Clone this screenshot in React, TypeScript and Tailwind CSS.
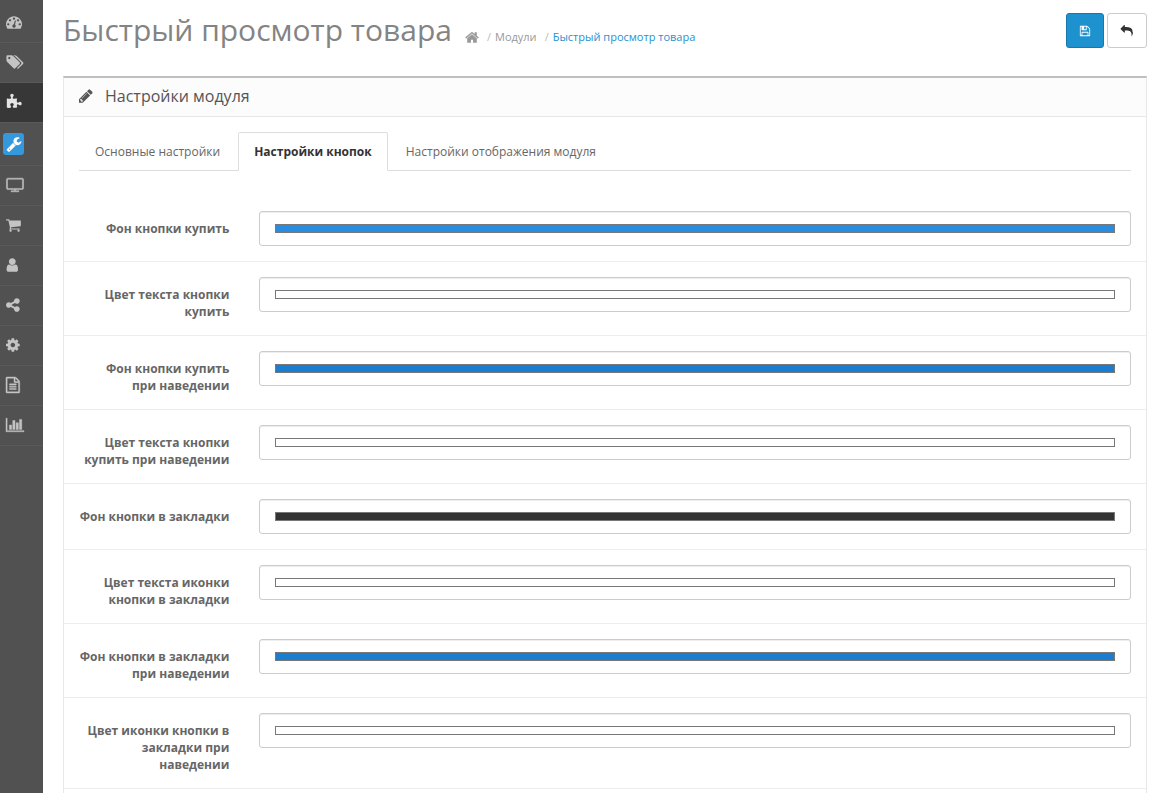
import { useState } from "react";

const icons = {
  dashboard: { w: 1792, d: "M384 1152q0-53-37.5-90.5t-90.5-37.5-90.5 37.5-37.5 90.5 37.5 90.5 90.5 37.5 90.5-37.5 37.5-90.5zm192-448q0-53-37.5-90.5t-90.5-37.5-90.5 37.5-37.5 90.5 37.5 90.5 90.5 37.5 90.5-37.5 37.5-90.5zm428 481l101-382q6-26-7.5-48.5t-38.5-29.5-48 6.5-30 39.5l-101 382q-60 5-107 43.5t-63 98.5q-20 77 20 146t117 89 146-20 89-117q16-60-6-117t-72-91zm660-33q0-53-37.5-90.5t-90.5-37.5-90.5 37.5-37.5 90.5 37.5 90.5 90.5 37.5 90.5-37.5 37.5-90.5zm-640-640q0-53-37.5-90.5t-90.5-37.5-90.5 37.5-37.5 90.5 37.5 90.5 90.5 37.5 90.5-37.5 37.5-90.5zm448 192q0-53-37.5-90.5t-90.5-37.5-90.5 37.5-37.5 90.5 37.5 90.5 90.5 37.5 90.5-37.5 37.5-90.5zm320 448q0 261-141 483-19 29-54 29h-1402q-35 0-54-29-141-221-141-483 0-182 71-348t191-286 286-191 348-71 348 71 286 191 191 286 71 348z" },
  tags: { w: 1920, d: "M448 448q0-53-37.5-90.5t-90.5-37.5-90.5 37.5-37.5 90.5 37.5 90.5 90.5 37.5 90.5-37.5 37.5-90.5zm1067 576q0 53-37 90l-491 492q-39 37-91 37-53 0-90-37l-715-716q-38-37-64.5-101t-26.5-117v-416q0-52 38-90t90-38h416q53 0 117 26.5t102 64.5l715 714q37 39 37 91zm384 0q0 53-37 90l-491 492q-39 37-91 37-36 0-59-14t-53-45l470-470q37-37 37-90 0-52-37-91l-715-714q-38-38-102-64.5t-117-26.5h224q53 0 117 26.5t102 64.5l715 714q37 39 37 91z" },
  puzzle: { w: 1792, d: "M1755 1083q0 81-44.5 135t-123.5 54q-41 0-77.5-17.5t-59-38-56.5-38-71-17.5q-110 0-110 124 0 39 16 115t15 115v5q-22 0-33 1-34 3-97.5 11.5t-115.5 13.5-98 5q-61 0-103-26.5t-42-83.5q0-37 17.5-71t38-56.5 38-59 17.5-77.5q0-79-54-123.5t-135-44.5q-84 0-143 45.5t-59 127.5q0 43 15 83t33.5 64.5 33.5 53 15 50.5q0 45-46 89-37 35-117 35-95 0-245-24-9-2-27.5-4t-27.5-4l-13-2q-1 0-3-1-2 0-2-1v-1024q2 1 17.5 3.5t34 5 21.5 3.5q150 24 245 24 80 0 117-35 46-44 46-89 0-22-15-50.5t-33.5-53-33.5-64.5-15-83q0-82 59-127.5t144-45.5q80 0 134 44.5t54 123.5q0 41-17.5 77.5t-38 59-38 56.5-17.5 71q0 57 42 83.5t103 26.5q64 0 180-15t163-17v2q-1 2-3.5 17.5t-5 34-3.5 21.5q-24 150-24 245 0 80 35 117 44 46 89 46 22 0 50.5-15t53-33.5 64.5-33.5 83-15q82 0 127.5 59t45.5 143z" },
  wrench: { w: 1792, d: "M448 1472q0-26-19-45t-45-19-45 19-19 45 19 45 45 19 45-19 19-45zm644-420l-682 682q-37 37-90 37-52 0-91-37l-106-108q-38-36-38-90 0-53 38-91l681-681q39 98 114.5 173.5t173.5 114.5zm634-435q0 39-23 106-47 134-164.5 217.5t-258.5 83.5q-185 0-316.5-131.5t-131.5-316.5 131.5-316.5 316.5-131.5q58 0 121.5 16.5t107.5 46.5q16 11 16 28t-16 28l-293 169v224l193 107q5-3 79-48.5t135.5-81 70.5-35.5q15 0 23.5 10t8.5 25z" },
  tv: { w: 1920, bold: true, d: "M1792 1248v-960q0-13-9.5-22.5t-22.5-9.5h-1600q-13 0-22.5 9.5t-9.5 22.5v960q0 13 9.5 22.5t22.5 9.5h1600q13 0 22.5-9.5t9.5-22.5zm128-960v960q0 66-47 113t-113 47h-736v128h352q14 0 23 9t9 23v64q0 14-9 23t-23 9h-832q-14 0-23-9t-9-23v-64q0-14 9-23t23-9h352v-128h-736q-66 0-113-47t-47-113v-960q0-66 47-113t113-47h1600q66 0 113 47t47 113z" },
  cart: { w: 1792, x: 64, d: "M704 1536q0 52-38 90t-90 38-90-38-38-90 38-90 90-38 90 38 38 90zm896 0q0 52-38 90t-90 38-90-38-38-90 38-90 90-38 90 38 38 90zm128-1088v512q0 24-16.5 42.5t-40.5 21.5l-1044 122q13 60 13 70 0 16-24 64h920q26 0 45 19t19 45-19 45-45 19h-1024q-26 0-45-19t-19-45q0-11 8-31.5t16-36 21.5-40 15.5-29.5l-177-823h-204q-26 0-45-19t-19-45 19-45 45-19h256q16 0 28.5 6.5t19.5 15.5 13 24.5 8 26 5.5 29.5 4.5 26h1201q26 0 45 19t19 45z" },
  user: { w: 1792, x: 192, d: "M1536 1399q0 109-62.5 187t-150.5 78h-854q-88 0-150.5-78t-62.5-187q0-85 8.5-160.5t31.5-152 58.5-131 94-89 134.5-34.5q131 128 313 128t313-128q76 0 134.5 34.5t94 89 58.5 131 31.5 152 8.5 160.5zm-256-887q0 159-112.5 271.5t-271.5 112.5-271.5-112.5-112.5-271.5 112.5-271.5 271.5-112.5 271.5 112.5 112.5 271.5z" },
  share: { w: 1792, x: 128, d: "M1344 1024q133 0 226.5 93.5t93.5 226.5-93.5 226.5-226.5 93.5-226.5-93.5-93.5-226.5q0-12 2-34l-360-180q-92 86-218 86-133 0-226.5-93.5t-93.5-226.5 93.5-226.5 226.5-93.5q126 0 218 86l360-180q-2-22-2-34 0-133 93.5-226.5t226.5-93.5 226.5 93.5 93.5 226.5-93.5 226.5-226.5 93.5q-126 0-218-86l-360 180q2 22 2 34t-2 34l360 180q92-86 218-86z" },
  cog: { w: 1792, x: 128, d: "M1152 896q0-106-75-181t-181-75-181 75-75 181 75 181 181 75 181-75 75-181zm512-109v222q0 12-8 23t-20 13l-185 28q-19 54-39 91 35 50 107 138 10 12 10 25t-9 23q-27 37-99 108t-94 71q-12 0-26-9l-138-108q-44 23-91 38-16 136-29 186-7 28-36 28h-222q-14 0-24.5-8.5t-11.5-21.5l-28-184q-49-16-90-37l-141 107q-10 9-25 9-14 0-25-11-126-114-165-168-7-10-7-23 0-12 8-23 15-21 51-66.5t54-70.5q-27-50-41-99l-183-27q-13-2-21-12.5t-8-23.5v-222q0-12 8-23t19-13l186-28q14-46 39-92-40-57-107-138-10-12-10-24 0-10 9-23 26-36 98.5-107.5t94.5-71.5q13 0 26 10l138 107q44-23 91-38 16-136 29-186 7-28 36-28h222q14 0 24.5 8.5t11.5 21.5l28 184q49 16 90 37l142-107q9-9 24-9 13 0 25 10 129 119 165 170 7 8 7 22 0 12-8 23-15 21-51 66.5t-54 70.5q26 50 41 98l183 28q13 2 21 12.5t8 23.5z" },
  file: { w: 1792, x: 128, bold: true, d: "M1596 380q28 28 48 76t20 88v1152q0 40-28 68t-68 28h-1344q-40 0-68-28t-28-68v-1600q0-40 28-68t68-28h896q40 0 88 20t76 48zm-444-244v376h376q-10-29-22-41l-313-313q-12-12-41-22zm384 1528v-1024h-416q-40 0-68-28t-28-68v-416h-768v1536h1280zm-1024-864q0-14 9-23t23-9h704q14 0 23 9t9 23v64q0 14-9 23t-23 9h-704q-14 0-23-9t-9-23v-64zm736 224q14 0 23 9t9 23v64q0 14-9 23t-23 9h-704q-14 0-23-9t-9-23v-64q0-14 9-23t23-9h704zm0 256q14 0 23 9t9 23v64q0 14-9 23t-23 9h-704q-14 0-23-9t-9-23v-64q0-14 9-23t23-9h704z" },
  chart: { w: 2048, bold: true, d: "M640 896v512h-256v-512h256zm384-512v1024h-256v-1024h256zm1024 1152v128h-2048v-1536h128v1408h1920zm-640-896v768h-256v-768h256zm384-384v1152h-256v-1152h256z" },
  home: { w: 1664, x: 64, d: "M1472 992v480q0 26-19 45t-45 19h-384v-384h-256v384h-384q-26 0-45-19t-19-45v-480q0-1 .5-3t.5-3l575-474 575 474q1 2 1 6zm223-69l-62 74q-8 9-21 11h-3q-13 0-21-7l-692-577-692 577q-12 8-24 7-13-2-21-11l-62-74q-8-10-7-23.5t11-21.5l719-599q32-26 76-26t76 26l244 204v-195q0-14 9-23t23-9h192q14 0 23 9t9 23v408l219 182q10 8 11 21.5t-7 23.5z" },
  pencil: { w: 1792, x: 128, d: "M491 1536l91-91-235-235-91 91v107h128v128h107zm523-928q0-22-22-22-10 0-17 7l-542 542q-7 7-7 17 0 22 22 22 10 0 17-7l542-542q7-7 7-17zm-54-192l416 416-832 832h-416v-416zm683 96q0 53-37 90l-166 166-416-416 166-165q36-38 90-38 53 0 91 38l235 234q37 39 37 91z" },
  save: { w: 1792, d: "M512 1536h768v-384h-768v384zm896 0h128v-896q0-14-10-38.5t-20-34.5l-281-281q-10-10-34-20t-39-10v416q0 40-28 68t-68 28h-576q-40 0-68-28t-28-68v-416h-128v1280h128v-416q0-40 28-68t68-28h832q40 0 68 28t28 68v416zm-384-928v-320q0-13-9.5-22.5t-22.5-9.5h-192q-13 0-22.5 9.5t-9.5 22.5v320q0 13 9.5 22.5t22.5 9.5h192q13 0 22.5-9.5t9.5-22.5zm640 32v928q0 40-28 68t-68 28h-1344q-40 0-68-28t-28-68v-1344q0-40 28-68t68-28h928q40 0 88 20t76 48l280 280q28 28 48 76t20 88z" },
  reply: { w: 1792, d: "M1792 1120q0 166-127 451-3 7-10.5 24t-13.5 30-13 22q-12 17-28 17-15 0-23.5-10t-8.5-25q0-9 2.5-26.5t2.5-23.5q5-68 5-123 0-112-19.5-200.5t-54-153.5-89.5-112-117.5-78.5-147.5-50-166-25-186-7.5h-224v256q0 26-19 45t-45 19-45-19l-512-512q-19-19-19-45t19-45l512-512q19-19 45-19t45 19 19 45v256h224q713 0 875 403 53 134 53 333z" },
};

type IconName = keyof typeof icons;

function Icon({ name, className }: { name: IconName; className: string }) {
  const icon: { w: number; x?: number; bold?: boolean; d: string } = icons[name];
  return (
    <svg aria-hidden="true" viewBox={`${icon.x ?? 0} 0 ${icon.w} 1792`} className={`shrink-0 overflow-visible fill-current ${className}`}>
      <path d={icon.d} stroke="currentColor" strokeWidth={icon.bold ? 50 : 0} />
    </svg>
  );
}

const menu: { icon: IconName; label: string; size: string }[] = [
  { icon: "dashboard", label: "Панель состояния", size: "h-4 w-4" },
  { icon: "tags", label: "Каталог", size: "h-4 w-[18px]" },
  { icon: "puzzle", label: "Модули", size: "h-4 w-4" },
  { icon: "wrench", label: "Инструменты", size: "h-4 w-4" },
  { icon: "tv", label: "Дизайн", size: "h-4 w-[18px]" },
  { icon: "cart", label: "Продажи", size: "h-4 w-4" },
  { icon: "user", label: "Клиенты", size: "h-4 w-4" },
  { icon: "share", label: "Маркетинг", size: "h-4 w-4" },
  { icon: "cog", label: "Система", size: "h-4 w-4" },
  { icon: "file", label: "Документы", size: "h-4 w-4" },
  { icon: "chart", label: "Отчёты", size: "h-4 w-[18px]" },
];

const tabs = ["Основные настройки", "Настройки кнопок", "Настройки отображения модуля"];

const fields = [
  { id: "buy-bg", label: "Фон кнопки купить", color: "#288de0" },
  { id: "buy-text", label: "Цвет текста кнопки купить", color: "#ffffff" },
  { id: "buy-bg-hover", label: "Фон кнопки купить при наведении", color: "#1b7dcf" },
  { id: "buy-text-hover", label: "Цвет текста кнопки купить при наведении", color: "#ffffff" },
  { id: "wish-bg", label: "Фон кнопки в закладки", color: "#333333" },
  { id: "wish-text", label: "Цвет текста иконки кнопки в закладки", color: "#ffffff" },
  { id: "wish-bg-hover", label: "Фон кнопки в закладки при наведении", color: "#1b7dcf" },
  { id: "wish-icon-hover", label: "Цвет иконки кнопки в закладки при наведении", color: "#ffffff" },
];

function Sidebar() {
  return (
    <nav aria-label="Меню" className="w-[43px] shrink-0 bg-[#515151] pt-[3px]">
      <ul>
        {menu.map((item) => (
          <li key={item.icon} className="border-b border-[#5a5a5a]">
            <a
              href="#"
              aria-label={item.label}
              className={`flex items-center ${
                item.icon === "puzzle"
                  ? "h-[39px] bg-[#373737] pb-0.5 pl-1.5 text-[#e4e4e4]"
                  : item.icon === "wrench"
                    ? "h-[42px] pl-[3px]"
                    : "h-[39px] pb-0.5 pl-1.5 text-[#c4c4c4]"
              }`}
            >
              {item.icon === "wrench" ? (
                <span className="flex h-[22px] w-[21px] items-center justify-center rounded-[3px] bg-[#3598dc] text-white">
                  <Icon name="wrench" className={item.size} />
                </span>
              ) : (
                <Icon name={item.icon} className={item.size} />
              )}
            </a>
          </li>
        ))}
      </ul>
    </nav>
  );
}

export default function App() {
  const [active, setActive] = useState(1);
  return (
    <div className="flex h-screen overflow-hidden bg-white font-['Open_Sans',sans-serif] text-xs leading-[17px] text-[#666]">
      <Sidebar />
      <main className="min-w-0 flex-1 pr-4 pl-5">
        <header className="flex items-start pt-[13px]">
          <h1 className="text-[30px] leading-[33px] text-[#848484]">Быстрый просмотр товара</h1>
          <nav aria-label="Навигация" className="ml-[13px] pt-4">
            <ol className="flex items-center text-[11px] leading-4 text-[#999]">
              <li>
                <a href="#" aria-label="Главная">
                  <Icon name="home" className="h-[15px] w-3.5" />
                </a>
              </li>
              <li>
                <span className="pr-1 pl-2 text-[#bbb]">/</span>
                <a href="#">Модули</a>
              </li>
              <li>
                <span className="pr-1 pl-2 text-[#bbb]">/</span>
                <a href="#" className="text-[#1e91cf]">Быстрый просмотр товара</a>
              </li>
            </ol>
          </nav>
          <div className="ml-auto flex gap-[3px]">
            <button aria-label="Сохранить" className="flex h-[35px] w-[38px] items-center justify-center rounded-[3px] border border-[#1978ab] bg-[#1e91cf] text-white">
              <Icon name="save" className="h-3 w-3" />
            </button>
            <button aria-label="Назад" className="flex h-[35px] w-10 items-center justify-center rounded-[3px] border border-[#ccc] bg-white text-[#333]">
              <Icon name="reply" className="h-3 w-3" />
            </button>
          </div>
        </header>

        <section className="mt-7 border border-t-2 border-[#e8e8e8] border-t-[#bfbfbf]">
          <div className="flex h-[39px] items-center border-b border-[#e8e8e8] bg-[#fcfcfc] pb-0.5 pl-[15px] text-[#555]">
            <Icon name="pencil" className="h-4 w-4" />
            <h2 className="ml-2.5 text-[16px] leading-5">Настройки модуля</h2>
          </div>
          <div className="py-[15px]">
            <div role="tablist" className="mx-[15px] mb-[25px] flex border-b border-[#ddd]">
              {tabs.map((tab, i) => (
                <button
                  key={tab}
                  role="tab"
                  aria-selected={active === i}
                  onClick={() => setActive(i)}
                  className={`-mb-px mr-0.5 h-[39px] rounded-t-[2px] border px-[15px] leading-[17px] ${
                    active === i ? "border-[#ddd] border-b-white bg-white font-bold text-[#333]" : "border-transparent"
                  }`}
                >
                  {tab}
                </button>
              ))}
            </div>
            <form className="divide-y divide-[#ededed] border-b border-[#ededed]">
              {fields.map((field) => (
                <div key={field.id} className="grid grid-cols-[1fr_5fr] py-[15px]">
                  <label htmlFor={field.id} className="px-[15px] pt-[9px] text-right font-bold">
                    {field.label}
                  </label>
                  <div className="px-[15px]">
                    <input
                      id={field.id}
                      type="color"
                      defaultValue={field.color}
                      className="block h-[35px] w-full rounded-[3px] border border-[#ccc] bg-white px-[13px] py-2 shadow-[inset_0_1px_1px_rgba(0,0,0,0.075)] [&::-webkit-color-swatch]:rounded-none [&::-webkit-color-swatch]:border [&::-webkit-color-swatch]:border-[#777] [&::-webkit-color-swatch-wrapper]:px-0.5 [&::-webkit-color-swatch-wrapper]:py-1"
                    />
                  </div>
                </div>
              ))}
            </form>
          </div>
        </section>
      </main>
    </div>
  );
}
